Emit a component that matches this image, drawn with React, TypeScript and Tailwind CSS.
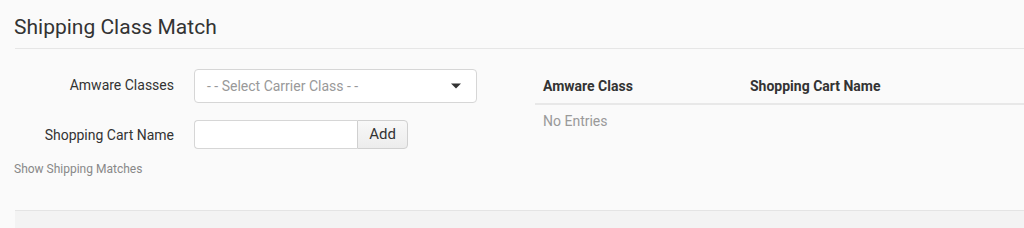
import React from "react";

export default function App() {
  return (
    <div className="w-[1024px] h-[228px] overflow-hidden bg-[#fafafa] text-[#333]" style={{ fontFamily: "Roboto, 'Liberation Sans', sans-serif" }}>
      <div className="pl-[14px] pt-[13px] h-[48px]">
        <h1 className="text-[21px] leading-[28px] text-[#333]">Shipping Class Match</h1>
      </div>
      <div className="ml-[15px] border-t border-[#e6e6e6]" />
      <div className="flex h-[161px]">
        <div className="w-[535px] shrink-0">
          <div className="flex items-center mt-[20px]">
            <label className="w-[174px] text-right text-[14px] leading-[20px] -mt-[2px] text-[#333]">Amware Classes</label>
            <div className="ml-[20px] w-[283px] h-[34px] border border-[#d6d6d6] rounded-[4px] bg-white flex items-center justify-between pl-[12px] pr-[15px]">
              <span className="text-[14px] text-[#999]">- - Select Carrier Class - -</span>
              <svg width="10" height="6" viewBox="0 0 10 6"><path d="M0 0.5h10L5 5.5z" fill="#333" /></svg>
            </div>
          </div>
          <div className="flex items-center mt-[17px]">
            <label className="w-[174px] text-right text-[14px] leading-[20px] text-[#333]">Shopping Cart Name</label>
            <div className="ml-[20px] flex h-[29px]">
              <div className="w-[163px] border border-[#d6d6d6] border-r-0 rounded-l-[4px] bg-white" />
              <button className="w-[51px] border border-[#d0d0d0] rounded-r-[4px] bg-gradient-to-b from-[#f8f8f8] to-[#ececec] text-[15px] text-[#333]">Add</button>
            </div>
          </div>
          <div className="pl-[14px] mt-[11px] text-[12px] text-[#888]">Show Shipping Matches</div>
        </div>
        <div className="flex-1">
          <div className="mt-[27px] h-[29px] flex items-start border-b-2 border-[#e8e8e8] text-[14px] font-bold text-[#333]">
            <div className="pl-[8px] w-[215px]">Amware Class</div>
            <div>Shopping Cart Name</div>
          </div>
          <div className="pl-[8px] pt-[6px] text-[14px] text-[#999]">No Entries</div>
        </div>
      </div>
      <div className="ml-[15px] h-[20px] bg-[#f3f3f3] border-t border-[#e4e4e4]" />
    </div>
  );
}
